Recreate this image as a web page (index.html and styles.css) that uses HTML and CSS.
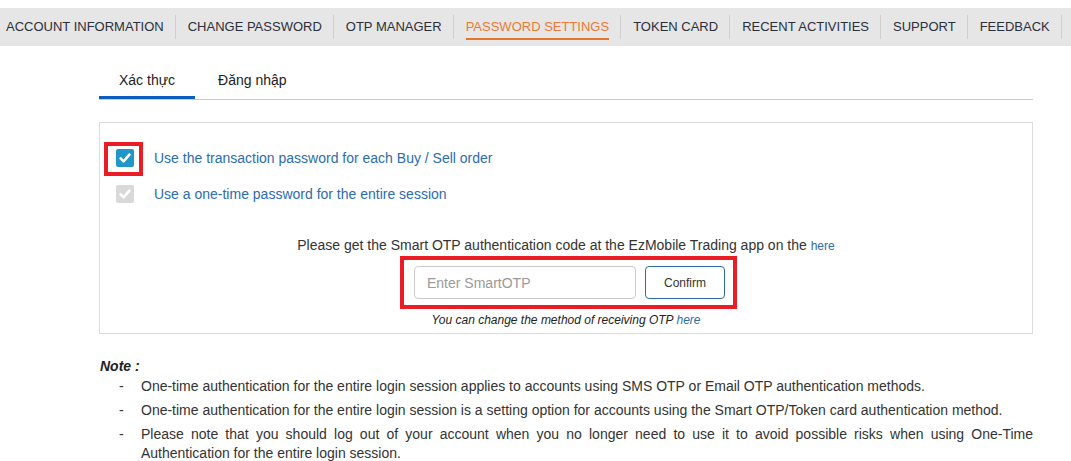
FILE: index.html
```html
<!DOCTYPE html>
<html lang="vi">
<head>
<meta charset="utf-8">
<title>Password settings</title>
<link rel="stylesheet" href="styles.css">
</head>
<body>
<nav class="topnav">
  <a class="nav-item">ACCOUNT INFORMATION</a>
  <a class="nav-item">CHANGE PASSWORD</a>
  <a class="nav-item">OTP MANAGER</a>
  <a class="nav-item active">PASSWORD SETTINGS</a>
  <a class="nav-item">TOKEN CARD</a>
  <a class="nav-item">RECENT ACTIVITIES</a>
  <a class="nav-item">SUPPORT</a>
  <a class="nav-item">FEEDBACK</a>
</nav>
<main class="content">
  <div class="tabs">
    <div class="tab active">Xác thực</div>
    <div class="tab">Đăng nhập</div>
  </div>
  <section class="panel">
    <div class="option">
      <span class="check checked marked">
        <svg viewBox="0 0 18 18" width="18" height="18"><path d="M4.6 9.4 L7.6 12.4 L13.4 5.6" fill="none" stroke="#fff" stroke-width="2.6" stroke-linecap="round" stroke-linejoin="round"/></svg>
      </span>
      <span class="option-label">Use the transaction password for each Buy / Sell order</span>
    </div>
    <div class="option">
      <span class="check disabled">
        <svg viewBox="0 0 18 18" width="18" height="18"><path d="M4.6 9.4 L7.6 12.4 L13.4 5.6" fill="none" stroke="#fff" stroke-width="2.6" stroke-linecap="round" stroke-linejoin="round"/></svg>
      </span>
      <span class="option-label">Use a one-time password for the entire session</span>
    </div>
    <p class="otp-hint">Please get the Smart OTP authentication code at the EzMobile Trading app on the <a class="link small">here</a></p>
    <div class="otp-row">
      <div class="otp-group">
        <input class="otp-input" type="text" placeholder="Enter SmartOTP">
        <button class="otp-btn" type="button">Confirm</button>
      </div>
    </div>
    <p class="otp-change">You can change the method of receiving OTP <a class="link">here</a></p>
  </section>
  <div class="note">
    <div class="note-title">Note :</div>
    <ul class="note-list">
      <li><span class="dash">-</span><span class="note-text">One-time authentication for the entire login session applies to accounts using SMS OTP or Email OTP authentication methods.</span></li>
      <li><span class="dash">-</span><span class="note-text">One-time authentication for the entire login session is a setting option for accounts using the Smart OTP/Token card authentication method.</span></li>
      <li><span class="dash">-</span><span class="note-text">Please note that you should log out of your account when you no longer need to use it to avoid possible risks when using One-Time Authentication for the entire login session.</span></li>
    </ul>
  </div>
</main>
</body>
</html>
```
FILE: styles.css
```css
body {
  margin: 0;
  font-family: "Liberation Sans", Arial, sans-serif;
  color: #333;
  background: #fff;
}

.topnav {
  margin-top: 8px;
  background: #e6e6e6;
  display: flex;
  padding: 7px 0 7px;
}

.nav-item {
  position: relative;
  font-size: 13px;
  line-height: 24px;
  padding: 0 11px 0 12px;
  border-right: 1px solid #cfcfcf;
  color: #2b2f3a;
  text-decoration: none;
  white-space: nowrap;
}

.nav-item:first-child {
  padding-left: 6px;
}

.nav-item.active {
  color: #ec7a33;
}

.nav-item.active::after {
  content: "";
  position: absolute;
  left: 12px;
  right: 11px;
  bottom: -1px;
  height: 2px;
  background: #e8742a;
}

.content {
  margin-left: 99px;
  width: 934px;
}

.tabs {
  display: flex;
  margin-top: 14px;
  border-bottom: 1px solid #cccccc;
}

.tab {
  font-size: 14px;
  line-height: 20px;
  padding: 10px 20px 6px;
  border-bottom: 3px solid transparent;
  color: #222;
}

.tab + .tab {
  margin-left: 3px;
}

.tab.active {
  border-bottom-color: #0d5cbf;
}

.panel {
  margin-top: 22px;
  border: 1px solid #dddddd;
  padding: 17px 16px 5px;
}

.option {
  display: flex;
  align-items: center;
  height: 36px;
  gap: 20px;
}

.check {
  position: relative;
  width: 18px;
  height: 18px;
  border-radius: 2px;
  display: flex;
  align-items: center;
  justify-content: center;
}

.check.checked {
  background: #2196c9;
}

.check.disabled {
  background: #d9d9d9;
}

.check.marked::after {
  content: "";
  position: absolute;
  left: -12px;
  top: -7px;
  right: -9px;
  bottom: -9px;
  border: 4px solid #ec1c24;
}

.option-label {
  font-size: 14px;
  line-height: 20px;
  color: #2b6cb3;
}

.otp-hint {
  margin: 23px 0 0;
  font-size: 14px;
  line-height: 20px;
  text-align: center;
  color: #333;
}

.link {
  color: #2b6cb3;
  text-decoration: none;
}

.link.small {
  font-size: 12px;
}

.otp-row {
  margin-top: 10px;
  display: flex;
  justify-content: center;
  padding-left: 7px;
}

.otp-group {
  position: relative;
  display: flex;
  gap: 9px;
}

.otp-group::after {
  content: "";
  position: absolute;
  left: -14px;
  top: -10px;
  right: -12px;
  bottom: -10px;
  border: 4px solid #ec1c24;
}

.otp-input {
  box-sizing: border-box;
  width: 222px;
  height: 33px;
  border: 1px solid #cccccc;
  border-radius: 4px;
  padding: 0 12px;
  font-family: "Liberation Sans", Arial, sans-serif;
  font-size: 14px;
  color: #333;
}

.otp-input::placeholder {
  color: #9a9a9a;
}

.otp-btn {
  box-sizing: border-box;
  width: 80px;
  height: 33px;
  border: 1px solid #2e6da4;
  border-radius: 4px;
  background: #fff;
  font-family: "Liberation Sans", Arial, sans-serif;
  font-size: 12px;
  color: #333;
}

.otp-change {
  margin: 13px 0 0;
  font-size: 12px;
  line-height: 16px;
  font-style: italic;
  text-align: center;
  color: #222;
}

.note {
  margin-top: 22px;
}

.note-title {
  font-size: 14px;
  line-height: 20px;
  font-weight: bold;
  font-style: italic;
  color: #222;
  padding-left: 1px;
}

.note-list {
  list-style: none;
  margin: 1px 0 0;
  padding: 0;
}

.note-list li {
  display: flex;
  font-size: 14px;
  line-height: 19px;
  margin-bottom: 5px;
  color: #333;
}

.dash {
  flex: 0 0 22px;
  padding-left: 20px;
}

.note-text {
  flex: 1;
  text-align: justify;
}
```
